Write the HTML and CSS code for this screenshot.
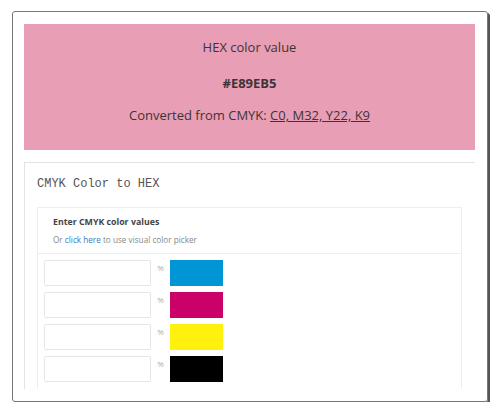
FILE: index.html
```html
<!DOCTYPE html>
<html>

<head>
    <link rel="stylesheet" href="styles.css">
</head>

<body>
    <div class="frame">
        <div class="frame-inner">
            <div class="result">
                <p class="result-label">HEX color value</p>
                <p class="result-hex">#E89EB5</p>
                <p class="result-from">Converted from CMYK: <a href="#">C0, M32, Y22, K9</a></p>
            </div>

            <div class="card">
                <h2 class="card-title">CMYK Color to HEX</h2>
                <div class="panel">
                    <div class="panel-head">
                        <div class="panel-heading">Enter CMYK color values</div>
                        <div class="panel-note">Or <a href="#">click here</a> to use visual color picker</div>
                    </div>
                    <div class="panel-body">
                        <div class="row">
                            <input class="field" type="text">
                            <span class="pct">%</span>
                            <span class="swatch cyan"></span>
                        </div>
                        <div class="row">
                            <input class="field" type="text">
                            <span class="pct">%</span>
                            <span class="swatch magenta"></span>
                        </div>
                        <div class="row">
                            <input class="field" type="text">
                            <span class="pct">%</span>
                            <span class="swatch yellow"></span>
                        </div>
                        <div class="row">
                            <input class="field" type="text">
                            <span class="pct">%</span>
                            <span class="swatch black"></span>
                        </div>
                    </div>
                </div>
            </div>
        </div>
    </div>
</body>

</html>
```

FILE: styles.css
```css
body {
    margin: 0;
    background: #fff;
    font-family: "Open Sans", sans-serif;
    color: #444;
}

.frame {
    margin: 11px 0 0 12px;
    width: 476px;
    height: 391px;
    box-sizing: border-box;
    border: 1px solid #777;
    border-radius: 3px;
    box-shadow: 2px 2px 0 #555;
    padding: 12px 12px 0 11px;
}

.frame-inner {
    height: 365px;
    overflow: hidden;
}

.result {
    background: #e89eb5;
    height: 126px;
    box-sizing: border-box;
    padding-top: 14px;
    text-align: center;
    color: #3d3436;
}

.result p {
    margin: 0;
}

.result-label {
    font-size: 13px;
    line-height: 18px;
}

.result-hex {
    font-size: 13px;
    font-weight: bold;
    line-height: 18px;
    margin-top: 18px !important;
}

.result-from {
    font-size: 13px;
    line-height: 18px;
    margin-top: 14px !important;
}

.result-from a {
    color: #3d3436;
}

.card {
    margin-top: 12px;
    border: 1px solid #e3e3e3;
    border-right: none;
    padding: 0 13px 0 12px;
    height: 260px;
}

.card-title {
    margin: 0;
    padding: 14px 0 0;
    font-family: "Liberation Mono", monospace;
    font-size: 12px;
    font-weight: normal;
    line-height: 15px;
    color: #555;
    height: 30px;
}

.panel {
    border: 1px solid #eee;
    border-bottom: none;
    height: 220px;
}

.panel-head {
    padding: 7px 15px 6px;
    border-bottom: 1px solid #eee;
}

.panel-heading {
    font-size: 8.8px;
    font-weight: bold;
    line-height: 15px;
    color: #444;
}

.panel-note {
    margin-top: 2px;
    font-size: 8.2px;
    line-height: 15px;
    color: #888;
}

.panel-note a {
    color: #3a7bbf;
    text-decoration: none;
}

.panel-body {
    padding: 6px 6px 0;
    display: flex;
    flex-direction: column;
    gap: 6px;
}

.row {
    display: flex;
    align-items: flex-start;
    height: 26px;
}

.field {
    width: 107px;
    height: 26px;
    box-sizing: border-box;
    border: 1px solid #e6e6e6;
    border-radius: 2px;
    margin: 0;
    padding: 0;
}

.pct {
    width: 19px;
    text-align: center;
    font-size: 8px;
    color: #aaa;
    line-height: 16px;
}

.swatch {
    width: 53px;
    height: 26px;
}

.cyan { background: #0096d6; }
.magenta { background: #cc0069; }
.yellow { background: #fff00e; }
.black { background: #000; }
```
